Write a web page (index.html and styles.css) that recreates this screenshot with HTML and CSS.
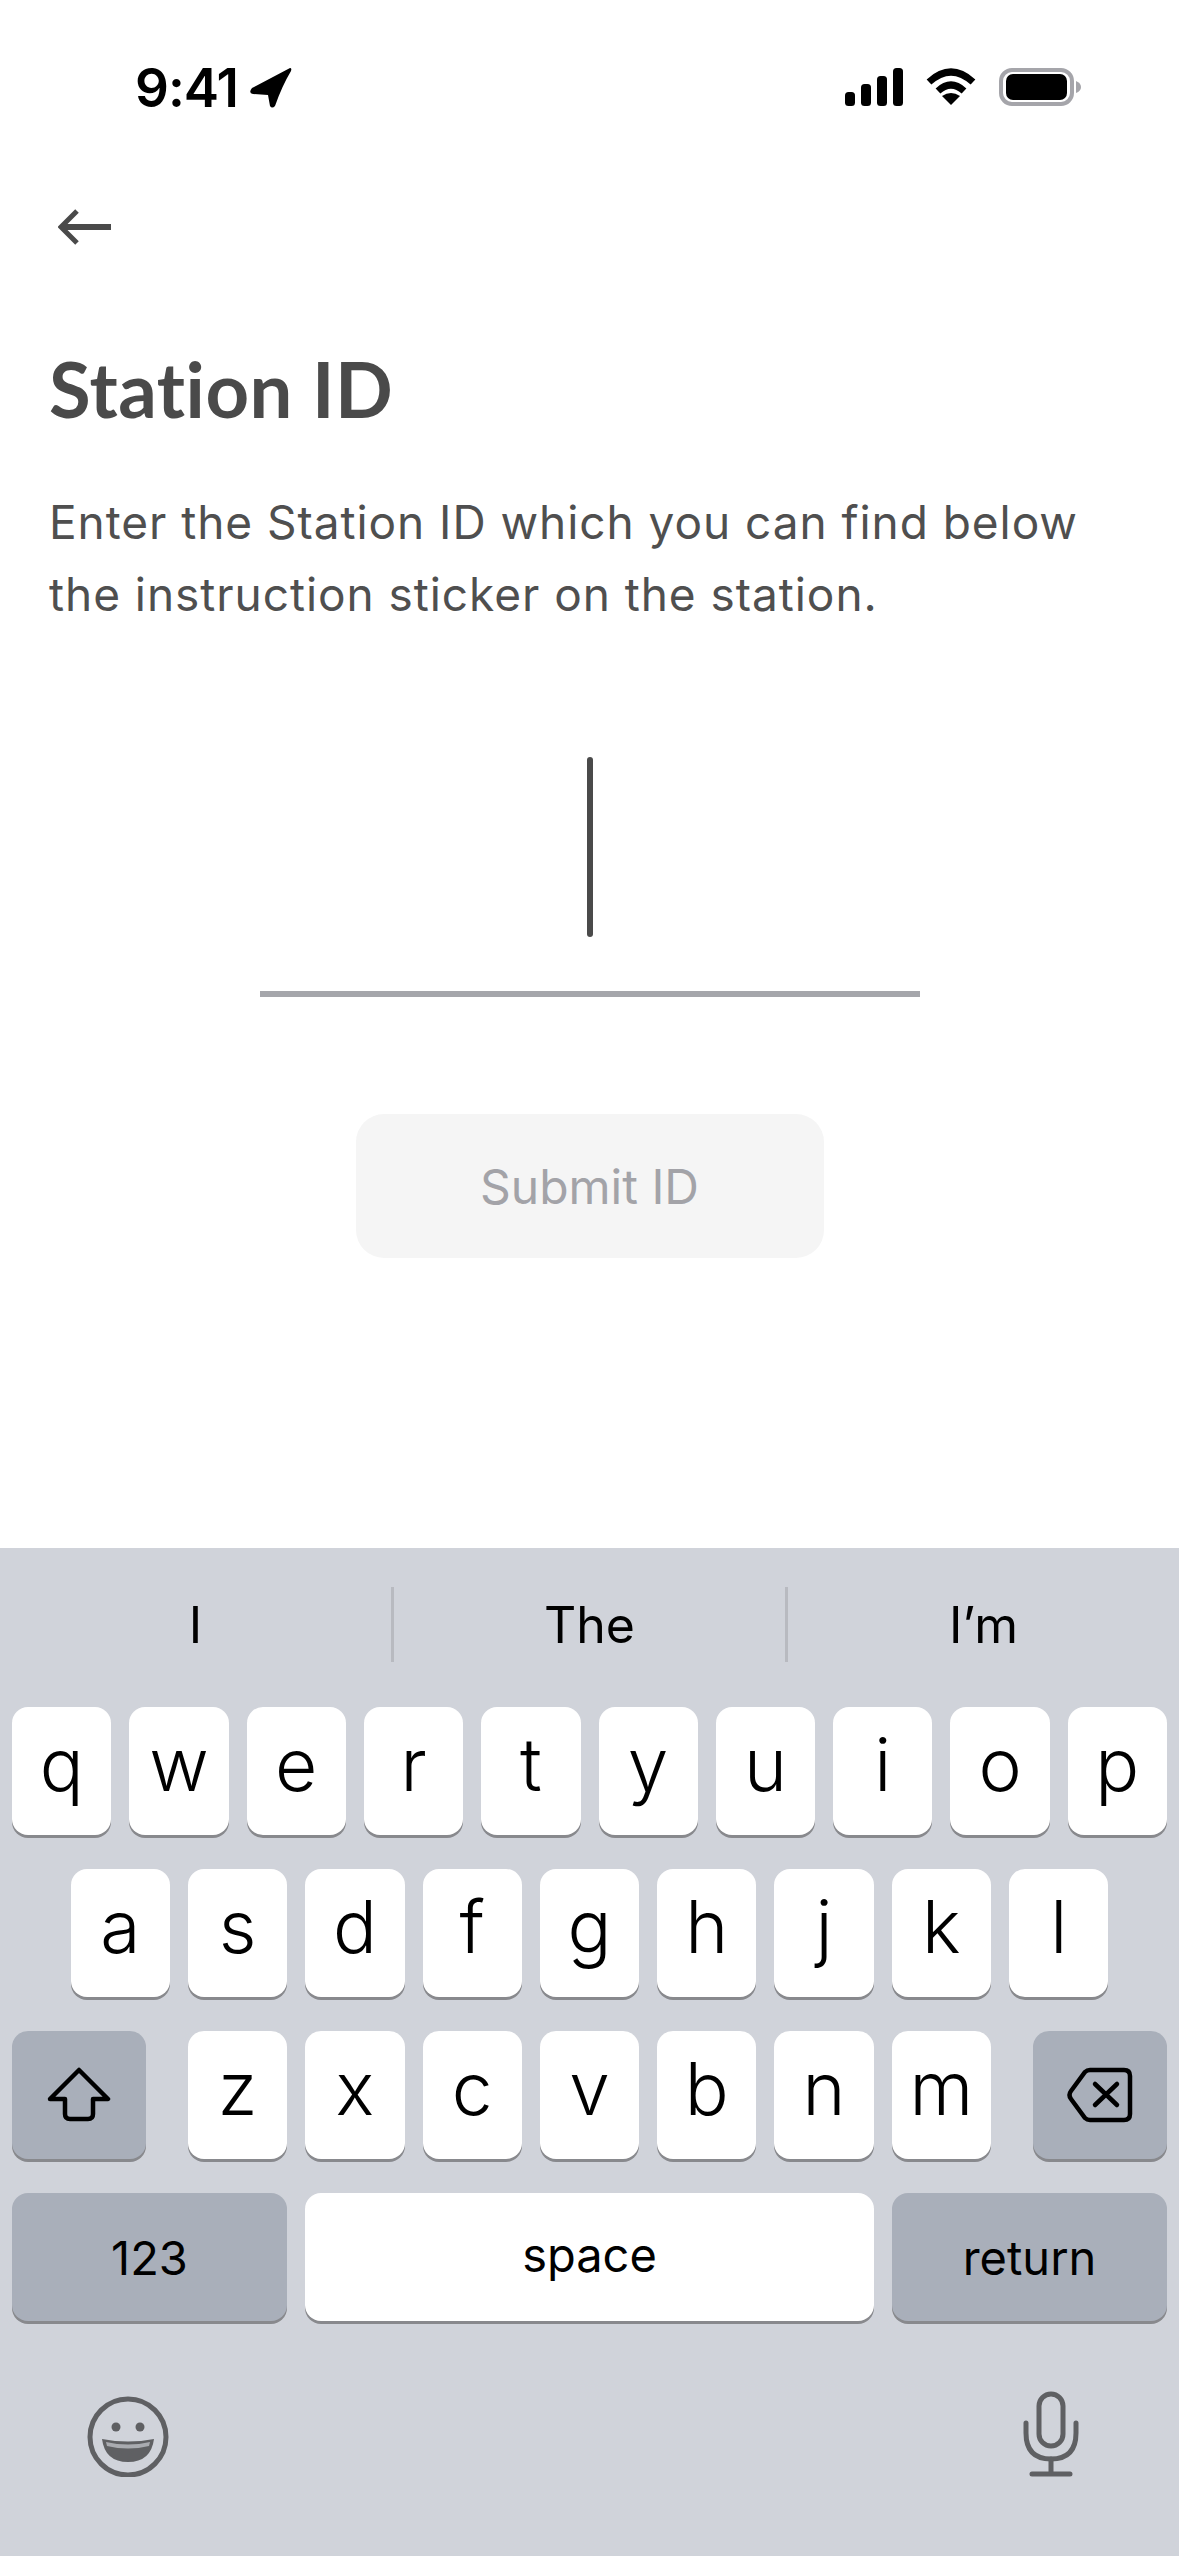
FILE: index.html
```html
<!DOCTYPE html>
<html lang="en">
<head>
    <meta charset="UTF-8">
    <meta name="viewport" content="width=device-width, initial-scale=1.0">
    <title>Station ID</title>
    <link rel="stylesheet" href="styles.css">
</head>
<body>
    <!-- Status bar -->
    <div class="status-bar">
        <div class="status-left">
            <span class="time">9:41</span>
            <svg width="42" height="40" viewBox="0 0 42 40">
                <path d="M40 0 L2 20 Q-2 25 3 26 L18 27 L20 38 Q22 41 25 38 Q32 18 41 3 Q42 0 40 0 Z" fill="#000"/>
            </svg>
        </div>
        <div class="status-right">
            <svg width="58" height="38" viewBox="0 0 58 38">
                <rect x="0" y="24" width="10" height="14" rx="3.500"/>
                <rect x="16" y="16" width="10" height="22" rx="3.500"/>
                <rect x="32" y="8" width="10" height="30" rx="3.500"/>
                <rect x="48" y="0" width="10" height="38" rx="3.500"/>
            </svg>
            <svg width="50" height="38" viewBox="0 0 50 38">
                <path d="M3 14 Q25 -6 47 14" fill="none" stroke="#000" stroke-width="7"/>
                <path d="M12 23 Q25 11 38 23" fill="none" stroke="#000" stroke-width="7"/>
                <path d="M25 37 L16 28 Q25 22 34 28 Z" fill="#000"/>
            </svg>
            <svg width="82" height="38" viewBox="0 0 82 38">
                <rect x="2" y="2" width="71" height="34" rx="11" fill="none" stroke="#a5a5aa" stroke-width="4"/>
                <rect x="7" y="6" width="61" height="26" rx="7" fill="#000"/>
                <path d="M77 13 Q82 15 82 19 Q82 23 77 25 Z" fill="#a5a5aa"/>
            </svg>
        </div>
    </div>

    <div class="content">
        <svg class="back" width="53" height="36" viewBox="0 0 53 36">
            <path d="M19 2 L3 18 L19 34" fill="none" stroke="#4a4a4a" stroke-width="5"/>
            <path d="M4 18 H53" fill="none" stroke="#4a4a4a" stroke-width="6"/>
        </svg>
        <h1>Station ID</h1>
        <p class="intro">Enter the Station ID which you can find below the instruction sticker on the station.</p>

        <div class="id-field"><span class="cursor"></span></div>
        <button class="submit" type="button" disabled>Submit ID</button>
    </div>

    <!-- Keyboard -->
    <div class="keyboard">
        <div class="suggestions">
            <span>I</span>
            <span>The</span>
            <span>I’m</span>
        </div>

        <div class="row">
            <div class="key">q</div>
            <div class="key">w</div>
            <div class="key">e</div>
            <div class="key">r</div>
            <div class="key">t</div>
            <div class="key">y</div>
            <div class="key">u</div>
            <div class="key">i</div>
            <div class="key">o</div>
            <div class="key">p</div>
        </div>
        <div class="row">
            <div class="key">a</div>
            <div class="key">s</div>
            <div class="key">d</div>
            <div class="key">f</div>
            <div class="key">g</div>
            <div class="key">h</div>
            <div class="key">j</div>
            <div class="key">k</div>
            <div class="key">l</div>
        </div>
        <div class="row">
            <div class="key special shift">
                <svg width="64" height="56" viewBox="0 0 64 56">
                    <path d="M32 3 L61 32 H46 V47 Q46 52 41 52 H23 Q18 52 18 47 V32 H3 Z" fill="none" stroke="#000" stroke-width="4.500" stroke-linejoin="round"/>
                </svg>
            </div>
            <div class="key">z</div>
            <div class="key">x</div>
            <div class="key">c</div>
            <div class="key">v</div>
            <div class="key">b</div>
            <div class="key">n</div>
            <div class="key">m</div>
            <div class="key special delete">
                <svg width="66" height="56" viewBox="0 0 66 56">
                    <path d="M23 3 H57 Q63 3 63 9 V47 Q63 53 57 53 H23 Q20 53 18 51 L4 32 Q1 28 4 24 L18 5 Q20 3 23 3 Z" fill="none" stroke="#000" stroke-width="4.500"/>
                    <path d="M28 17 L50 38 M50 17 L28 38" fill="none" stroke="#000" stroke-width="4.500" stroke-linecap="round"/>
                </svg>
            </div>
        </div>
        <div class="row">
            <div class="key special wide label">123</div>
            <div class="key space label">space</div>
            <div class="key special wide label">return</div>
        </div>

        <div class="keyboard-bottom">
            <svg width="82" height="86" viewBox="0 0 82 86">
                <circle cx="41" cy="46" r="38" fill="none" stroke="#5f6063" stroke-width="5"/>
                <circle cx="29" cy="36" r="4.500" fill="#5f6063"/>
                <circle cx="53" cy="36" r="4.500" fill="#5f6063"/>
                <path d="M15 48 Q41 53 67 48 Q64 71 41 71 Q18 71 15 48 Z" fill="#5f6063"/>
                <path d="M19 51 Q41 56 63 51 L62 55 Q41 60 20 55 Z" fill="#a9abb0"/>
            </svg>
            <svg width="56" height="86" viewBox="0 0 56 86">
                <rect x="16" y="3" width="24" height="52" rx="12" fill="none" stroke="#5f6063" stroke-width="5"/>
                <path d="M3 32 V42 Q3 68 28 68 Q53 68 53 42 V32" fill="none" stroke="#5f6063" stroke-width="5" stroke-linecap="round"/>
                <path d="M28 68 V82 M9 83 H47" fill="none" stroke="#5f6063" stroke-width="5" stroke-linecap="round"/>
            </svg>
        </div>
    </div>
</body>
</html>
```

FILE: styles.css
```css
body {
    font-family: Inter, "Liberation Sans", sans-serif;
    margin: 0;
    padding: 0;
    width: 1179px;
    height: 2556px;
    background: white;
    display: flex;
    flex-direction: column;
    overflow: hidden;
}

/* Status bar */
.status-bar {
    height: 140px;
    box-sizing: border-box;
    padding: 68px 98px 0 135px;
    display: flex;
    justify-content: space-between;
    align-items: flex-start;
}

.status-left {
    display: flex;
    align-items: center;
    gap: 12px;
}

.time {
    font-size: 53px;
    font-weight: 600;
    line-height: 38px;
    color: black;
    letter-spacing: -1px;
}

.status-right {
    display: flex;
    align-items: flex-start;
    gap: 23px;
}

/* Main content */
.content {
    padding: 69px 48px 0;
    display: flex;
    flex-direction: column;
    color: #4f4f4f;
}

.back {
    margin-left: 10px;
    display: block;
}

h1 {
    font-family: Lato, sans-serif;
    font-size: 76px;
    font-weight: 700;
    font-variant-ligatures: none;
    letter-spacing: 0.5px;
    line-height: 70px;
    color: #4a4a4a;
    margin: 109px 0 62px 1px;
}

.intro {
    font-size: 46px;
    line-height: 72px;
    letter-spacing: 0.950px;
    margin: 0 0 0 1px;
}

.id-field {
    width: 660px;
    height: 234px;
    margin: 127px auto 0;
    border-bottom: 6px solid #a5a6ab;
    display: flex;
    justify-content: center;
    align-items: flex-start;
}

.cursor {
    width: 6px;
    height: 180px;
    background-color: #4a4a4a;
    border-radius: 3px;
}

.submit {
    width: 468px;
    height: 144px;
    margin: 117px auto 0;
    padding: 0;
    background-color: #f5f5f5;
    color: #a3a3a8;
    border: none;
    border-radius: 28px;
    font-family: Inter, sans-serif;
    font-size: 48px;
}

/* Keyboard */
.keyboard {
    margin-top: auto;
    height: 1008px;
    box-sizing: border-box;
    background-color: #d0d3da;
    color: black;
}

.suggestions {
    height: 159px;
    box-sizing: border-box;
    padding: 39px 0 45px;
    display: flex;
    font-size: 50px;
}

.suggestions span {
    flex: 1;
    display: flex;
    align-items: center;
    justify-content: center;
}

.suggestions span + span {
    border-left: 3px solid #b8bac0;
}

.row {
    display: flex;
    justify-content: center;
    gap: 18px;
    margin-bottom: 34px;
}

.key {
    width: 99.300px;
    height: 128px;
    box-sizing: border-box;
    padding-bottom: 13px;
    background-color: white;
    border-radius: 16px;
    box-shadow: 0 3px 0 #88898d;
    display: flex;
    align-items: center;
    justify-content: center;
    font-size: 73px;
    font-weight: 350;
}

.special {
    background-color: #a9afba;
}

.shift {
    width: 134px;
    margin-right: 24px;
    padding: 0;
}

.delete {
    width: 134px;
    margin-left: 24px;
    padding: 0;
}

.wide {
    width: 275px;
}

.label {
    font-size: 47px;
    font-weight: 400;
    padding-bottom: 0;
}

.space {
    width: 569px;
    padding-bottom: 5px;
}

.keyboard-bottom {
    display: flex;
    justify-content: space-between;
    align-items: flex-start;
    padding: 36px 100px 0 87px;
}
```
